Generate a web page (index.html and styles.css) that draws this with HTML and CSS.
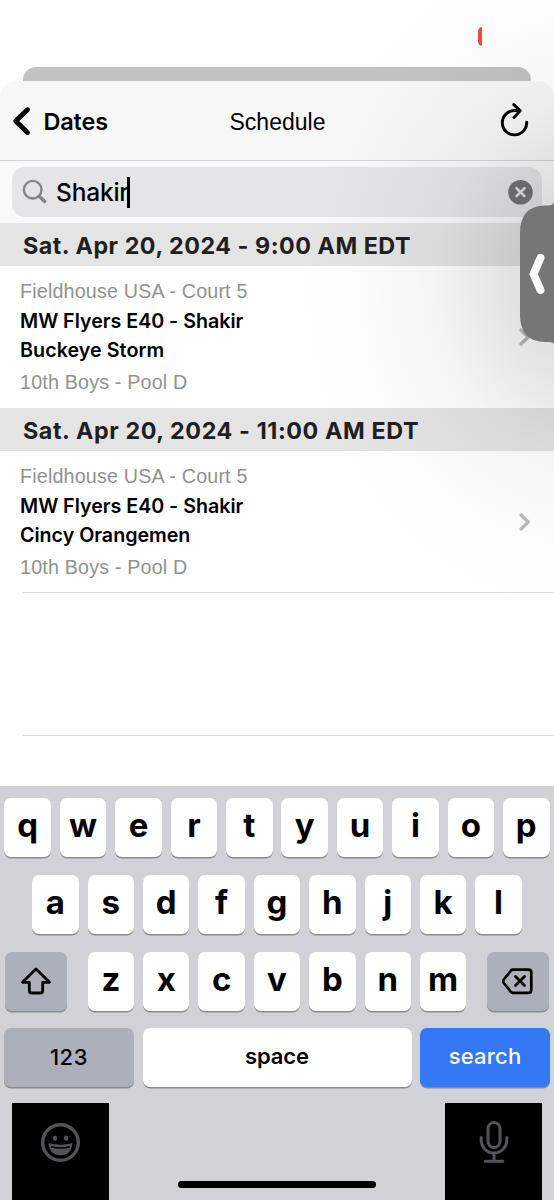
FILE: index.html
```html
<!DOCTYPE html>
<html lang="en">
<head>
<meta charset="utf-8">
<title>Schedule</title>
<link rel="stylesheet" href="styles.css">
</head>
<body>
<div class="phone">
  <div class="status"><span class="rec"></span></div>
  <div class="back-sheet"></div>
  <main class="sheet">
    <header class="nav">
      <div class="back">
        <svg width="20" height="30" viewBox="0 0 20 30"><path d="M16.500 3.800 4.700 15.100 16.500 26.500" fill="none" stroke="#000" stroke-width="4.900" stroke-linecap="round" stroke-linejoin="round"/></svg>
        <span class="back-label">Dates</span>
      </div>
      <h1 class="title">Schedule</h1>
      <svg class="reload" width="30" height="36" viewBox="0 0 30 36"><path d="M26.700 19.200A12.200 12.200 0 1 1 14.500 7.500H20M13.800 1.600 20.200 7.700 14 14.400" fill="none" stroke="#000" stroke-width="2.900" stroke-linecap="round" stroke-linejoin="round"/></svg>
    </header>
    <div class="search">
      <div class="field">
        <svg width="26" height="26" viewBox="0 0 26 26"><circle cx="10.700" cy="10.700" r="8.800" fill="none" stroke="#858587" stroke-width="2.400"/><path d="m17.500 17.500 5.200 4.900" stroke="#858587" stroke-width="3.500" stroke-linecap="round"/></svg>
        <span class="query">Shakir</span><span class="caret"></span>
        <svg class="clear" width="25" height="25" viewBox="0 0 25 25"><circle cx="12.500" cy="12.300" r="12.300" fill="#747476"/><path d="m8.500 8.100 8 8m0-8-8 8" stroke="#e4e4e6" stroke-width="2.400" stroke-linecap="round"/></svg>
      </div>
    </div>
    <h2 class="date">Sat. Apr 20, 2024 - 9:00 AM EDT</h2>
    <section class="game">
      <div class="info">
        <p class="meta place">Fieldhouse USA - Court 5</p>
        <p class="team first">MW Flyers E40 - Shakir</p>
        <p class="team buckeye">Buckeye Storm</p>
        <p class="meta pool">10th Boys - Pool D</p>
      </div>
      <svg class="chev" width="14" height="20" viewBox="0 0 14 20"><path d="m3 3 7.300 7L3 17" fill="none" stroke="#bababc" stroke-width="3.300" stroke-linecap="round" stroke-linejoin="round"/></svg>
    </section>
    <h2 class="date later">Sat. Apr 20, 2024 - 11:00 AM EDT</h2>
    <section class="game">
      <div class="info">
        <p class="meta place">Fieldhouse USA - Court 5</p>
        <p class="team first">MW Flyers E40 - Shakir</p>
        <p class="team cincy">Cincy Orangemen</p>
        <p class="meta pool">10th Boys - Pool D</p>
      </div>
      <svg class="chev" width="14" height="20" viewBox="0 0 14 20"><path d="m3 3 7.300 7L3 17" fill="none" stroke="#bababc" stroke-width="3.300" stroke-linecap="round" stroke-linejoin="round"/></svg>
    </section>
    <div class="blank"></div>
  </main>
  <div class="shade"></div>
  <div class="tab">
    <svg width="34" height="142" viewBox="0 0 34 142"><path d="M34 0Q33 3.500 28 3.500H25Q0 4 0 31V114Q1 140 25 140H29Q33 140 34 142Z" fill="#767676"/><path d="M20.500 56 13.500 72 20.500 88" fill="none" stroke="#fff" stroke-width="8" stroke-linecap="round" stroke-linejoin="round"/></svg>
  </div>
  <div class="keyboard">
    <div class="row"><span class="key">q</span><span class="key">w</span><span class="key">e</span><span class="key">r</span><span class="key">t</span><span class="key">y</span><span class="key">u</span><span class="key">i</span><span class="key">o</span><span class="key">p</span></div>
    <div class="row"><span class="key">a</span><span class="key">s</span><span class="key">d</span><span class="key">f</span><span class="key">g</span><span class="key">h</span><span class="key">j</span><span class="key">k</span><span class="key">l</span></div>
    <div class="row">
      <span class="key gray shift"><svg width="32" height="30" viewBox="0 0 32 30"><path d="M16 3 2.500 16.300H9.300V24.500Q9.300 27 11.800 27H20.200Q22.700 27 22.700 24.500V16.300H29.500Z" fill="none" stroke="#000" stroke-width="2.800" stroke-linejoin="round"/></svg></span>
      <span class="key">z</span><span class="key">x</span><span class="key">c</span><span class="key">v</span><span class="key">b</span><span class="key">n</span><span class="key">m</span>
      <span class="key gray delete"><svg width="32" height="30" viewBox="0 0 32 30"><path d="M11 3.600H26.500Q29.300 3.600 29.300 6.500V24Q29.300 26.900 26.500 26.900H11Q9.800 26.900 9 26L1.800 17Q.5 15.200 1.800 13.500L9 4.500Q9.800 3.600 11 3.600Z" fill="none" stroke="#000" stroke-width="2.700"/><path d="m13.500 10.500 9 9m0-9-9 9" stroke="#000" stroke-width="2.800" stroke-linecap="round"/></svg></span>
    </div>
    <div class="row">
      <span class="key gray word wide numbers">123</span><span class="key word space">space</span><span class="key word wide go">search</span>
    </div>
    <div class="dock">
      <div class="tile"><svg width="40" height="40" viewBox="0 0 40 40"><circle cx="19.500" cy="20.500" r="17.800" fill="none" stroke="#545458" stroke-width="3.400"/><ellipse cx="14" cy="16.200" rx="2.100" ry="2.600" fill="#545458"/><ellipse cx="25" cy="16.200" rx="2.100" ry="2.600" fill="#545458"/><path d="M7.700 21.300Q19.500 24.200 31.300 21.300Q30.500 33.300 19.500 33.300T7.700 21.300Z" fill="#545458"/><path d="M10.200 24.700Q19.500 27.300 28.800 24.700" fill="none" stroke="#000" stroke-width="1.700"/></svg></div>
      <div class="home"></div>
      <div class="tile"><svg width="32" height="44" viewBox="0 0 32 44"><g fill="none" stroke="#545458" stroke-width="3" stroke-linecap="round"><rect x="10" y="3.500" width="12" height="25" rx="6"/><path d="M3.200 18.500V21A12.800 13 0 0 0 28.800 21V18.500M16 35V41M7.200 42.200H24.800"/></g></svg></div>
    </div>
  </div>
</div>
</body>
</html>
```
FILE: styles.css
```css
* { box-sizing: border-box; }
body { margin: 0; background: #fff; color: #000; font-family: Inter, "Noto Sans", sans-serif; }
h1, h2, p { margin: 0; }
svg { display: block; flex: none; }
.phone { position: relative; width: 554px; height: 1200px; overflow: hidden; display: flex; flex-direction: column; }
.status { height: 67px; flex: none; padding: 27px 72px 0 0; display: flex; justify-content: flex-end; }
.rec { width: 4.500px; height: 19px; background: #e84c3f; border-radius: 5px 0 0 5px / 6px 0 0 6px; }
.back-sheet { height: 14px; flex: none; margin: 0 23px; background: #c2c2c2; border-radius: 13px 13px 0 0; }
.sheet { height: 705px; flex: none; background: #fff; border-radius: 16px 16px 0 0; overflow: hidden; }
.nav { height: 80px; background: #f7f7f7; border-bottom: 1px solid #d4d4d4; display: grid; grid-template-columns: 1fr auto 1fr; align-items: center; padding: 1px 24px 0 11px; }
.back { display: flex; align-items: center; gap: 12.5px; }
.back-label { font-size: 23.500px; font-weight: 600; letter-spacing: -.2px; }
.title { font-family: "Liberation Sans", Arial, sans-serif; font-size: 23px; font-weight: 400; padding: 2px 0 0 14px; }
.reload { justify-self: end; }
.search { height: 62px; padding: 6px 12px 0; background: #f9f9f9; }
.field { height: 50px; border-radius: 13px; background: #e5e5e7; display: flex; align-items: center; padding: 0 9px 0 10px; }
.query { margin-left: 8px; font-size: 24.500px; font-weight: 500; letter-spacing: -.2px; }
.caret { width: 3px; height: 31px; background: #000; margin-left: -2px; }
.clear { margin-left: auto; }
.date { height: 43px; padding-left: 23px; background: #e4e4e4; color: #202020; font-size: 23.300px; line-height: 45px; font-weight: 700; letter-spacing: .52px; white-space: nowrap; }
.later { letter-spacing: .6px; }
.game { height: 142px; display: flex; align-items: center; justify-content: space-between; padding: 0 22px 0 20px; }
.info { display: flex; flex-direction: column; white-space: nowrap; height: 142px; padding-top: 11px; }
.meta { font-family: "Liberation Sans", Arial, sans-serif; font-size: 19.700px; letter-spacing: .18px; line-height: 28px; color: #919191; }
.team { font-size: 19.700px; line-height: 29px; font-weight: 600; letter-spacing: -.03px; }
.buckeye { letter-spacing: .05px; }
.first { margin-top: 2px; }
.pool { margin-top: 3px; }
.blank { height: 144px; margin: -1px 0 0 23px; border: solid #dedede; border-width: 1px 0; }
.shade { position: absolute; inset: 0 0 414px; pointer-events: none; background: radial-gradient(ellipse 290px 340px at 585px 280px, rgba(0,0,0,.14), rgba(0,0,0,.115) 25%, rgba(0,0,0,.045) 52%, rgba(0,0,0,.01) 80%, transparent); }
.tab { position: absolute; right: 0; top: 202px; }
.keyboard { height: 414px; flex: none; background: #d1d2d8; padding-top: 12px; display: flex; flex-direction: column; }
.row { height: 59px; margin-bottom: 17.8px; flex: none; display: flex; justify-content: center; gap: 8.9px; }
.key { width: 46.5px; height: 59px; flex: none; background: #fff; border-radius: 7px; box-shadow: 0 1.5px 0 #8a8b8e; display: flex; align-items: center; justify-content: center; font-size: 33px; font-weight: 700; line-height: 57px; padding-bottom: 4px; }
.gray { background: #abb0bb; }
.shift, .delete { width: 62.500px; padding: 0; }
.shift { margin-right: 11.600px; }
.delete { margin-left: 11.600px; }
.word { font-size: 22px; font-weight: 600; letter-spacing: -.1px; padding-bottom: 2px; }
.wide { width: 129.200px; }
.numbers { padding: 0; font-weight: 500; letter-spacing: .6px; }
.space { width: 269px; }
.go { background: #3478f6; color: #fff; font-weight: 500; letter-spacing: .2px; }
.dock { display: flex; justify-content: space-between; align-items: flex-start; padding: 0 12px; margin-top: -2.200px; }
.tile { width: 97px; height: 97px; background: #000; display: flex; justify-content: center; padding-top: 19px; }
.tile:last-child { padding-top: 16px; }
.home { width: 198px; height: 7px; border-radius: 4px; background: #000; margin-top: 78px; }
```
